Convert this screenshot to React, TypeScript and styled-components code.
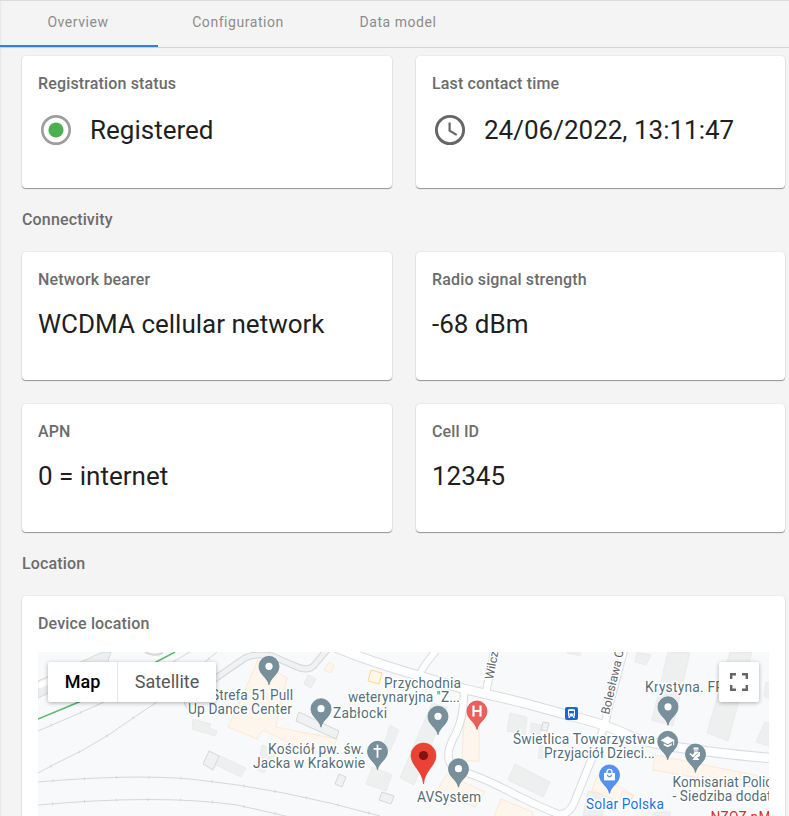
import React from "react";
import styled, { createGlobalStyle } from "styled-components";

const GlobalStyle = createGlobalStyle`
  * { box-sizing: border-box; }
  body { margin: 0; background: #f4f4f4; font-family: Roboto, "Liberation Sans", sans-serif; overflow: hidden; }
`;

const Page = styled.div`
  height: 816px;
  overflow: hidden;
  display: flex;
  flex-direction: column;
  border-top: 1px solid #dcdcdc;
  box-shadow: inset 2px 0 2px -1px #e6e6e6;
`;

const Tabs = styled.nav`
  display: flex;
  flex: none;
  height: 47px;
  border-bottom: 1px solid #d4d4d4;
`;

const Tab = styled.button<{ $width: number; $active?: boolean }>`
  width: ${(p) => p.$width}px;
  height: 46px;
  padding: 0 2px 2px 0;
  border: 0;
  border-bottom: 2px solid ${(p) => (p.$active ? "#3579f6" : "transparent")};
  background: none;
  color: #8c8c8c;
  font: 400 14px/42px Roboto, sans-serif;
  letter-spacing: 0.55px;
  text-align: center;
`;

const Content = styled.main`
  padding: 8px 4px 0 22px;
`;

const Grid = styled.section`
  display: grid;
  grid-template-columns: 370px 369px;
  gap: 24px;
`;

const Card = styled.article<{ $height: number }>`
  height: ${(p) => p.$height}px;
  padding: 16px;
  border-radius: 4px;
  background: #fff;
  box-shadow: 0 1px 1px rgba(0, 0, 0, 0.38), 0 0 2px rgba(0, 0, 0, 0.12);
`;

const Label = styled.h2`
  margin: 0;
  color: #6c6c6c;
  font-size: 16px;
  font-weight: 500;
  line-height: 24px;
  letter-spacing: 0.15px;
`;

const SectionTitle = styled(Label)`
  height: 64px;
  padding-top: 20px;
`;

const Value = styled.div<{ $tall?: boolean }>`
  display: flex;
  align-items: center;
  gap: 16px;
  height: 36px;
  margin-top: ${(p) => (p.$tall ? 16 : 14)}px;
  color: #1f1f1f;
  font-size: 26px;
  line-height: 36px;
  white-space: nowrap;
`;

const StatusIcon = styled.svg`
  width: 36px;
  height: 36px;
  flex: none;
`;

const MapFrame = styled.div`
  position: relative;
  height: 180px;
  margin-top: 16px;
  overflow: hidden;
`;

const MapDrawing = styled.svg`
  display: block;
  width: 731px;
  height: 180px;
`;

const MapTypes = styled.div`
  position: absolute;
  top: 10px;
  left: 10px;
  display: flex;
  height: 40px;
  border-radius: 2px;
  background: #fff;
  box-shadow: 0 1px 4px rgba(0, 0, 0, 0.3);
`;

const MapType = styled.button<{ $active?: boolean }>`
  width: ${(p) => (p.$active ? 69 : 99)}px;
  padding: 0;
  border: 0;
  background: none;
  color: ${(p) => (p.$active ? "#000" : "#565656")};
  font: ${(p) => (p.$active ? 500 : 400)} 18px/40px Roboto, sans-serif;
  & + & { border-left: 1px solid #e6e6e6; }
`;

const Fullscreen = styled.button`
  position: absolute;
  top: 10px;
  right: 10px;
  display: grid;
  place-items: center;
  width: 40px;
  height: 40px;
  padding: 0;
  border: 0;
  border-radius: 2px;
  background: #fff;
  box-shadow: 0 1px 4px rgba(0, 0, 0, 0.3);
`;

const PlaceText = styled.text<{ $color?: string }>`
  font: 400 13.8px Roboto, sans-serif;
  fill: ${(p) => p.$color || "#546e7a"};
  stroke: #fff;
  stroke-width: 3px;
  stroke-linejoin: round;
  paint-order: stroke;
`;

const StreetText = styled(PlaceText)`
  font-size: 12px;
  fill: #5f6368;
`;

const PIN = "M0 18.5C-1.2 11-10 8.5-10 0A10 10 0 0 1 10 0C10 8.5 1.2 11 0 18.5Z";

function Pin({ x, y, color = "#78909c", edge = "#607d8b", children }: {
  x: number; y: number; color?: string; edge?: string; children?: React.ReactNode;
}) {
  return (
    <g transform={`translate(${x} ${y})`}>
      <path d={PIN} fill={color} stroke={edge} strokeWidth=".7" />
      {children || <circle r="3.6" fill="#fff" />}
    </g>
  );
}

const buildings = [
  "193,719 211,724 209,728 217,731 215,736 192,729",
  "218,755 246,768 241,777 214,764",
  "262,745 277,751 264,773 257,770",
  "308,675 316,679 311,688 304,684",
  "390,725 399,730 390,751 383,747",
  "372,767 392,775 386,791 366,784",
  "432,703 447,707 414,785 400,778",
  "510,713 527,717 525,735 507,731",
  "531,723 542,725 540,735 531,733",
  "515,764 550,782 543,797 508,780",
  "540,745 547,748 545,759 538,758",
  "568,652 581,653 580,656 567,653",
  "637,652 651,655 646,665 635,662",
  "668,652 690,652 673,726 652,720",
  "730,652 752,652 728,741 707,733",
  "765,722 776,725 772,747 756,742",
  "588,791 606,795 602,816 583,816",
  "655,812 670,812 670,818 651,818",
  "766,682 772,682 772,700 764,696",
];

const outlined = [
  "209,751 219,756 213,770 203,764",
  "299,712 339,731 336,739 296,721",
  "339,774 346,777 342,787 335,784",
  "382,792 394,796 391,804 379,800",
  "543,722 549,723 547,731 541,730",
];

const shops = [
  "258,660 287,678 280,705 276,727 337,739 327,762 263,730 257,739 228,727 245,690",
  "329,662 334,665 331,673 324,670",
  "464,716 479,718 479,761 462,761",
  "447,774 485,792 475,807 437,791",
  "501,799 533,812 532,817 494,817",
  "598,775 634,795 628,806 592,790",
  "655,755 769,778 769,790 653,770",
  "622,791 633,795 629,804 620,799",
];

const streets = [
  { d: "M330 645Q370 662 420 676L464 689Q490 695 520 702L571 716Q608 725 630 736T769 758", w: 8.5 },
  { d: "M420 674Q423 666 436 651", w: 6 },
  { d: "M486 692L495 648", w: 6.5 },
  { d: "M464 690Q464 720 454 737Q444 756 452 766Q458 770 473 775Q490 781 520 797Q545 809 558 814Q570 816 576 798L590 763Q604 732 608 710L624 650", w: 6.5 },
];

const rails = [
  "M38 731L73 716L104 702L190 652",
  "M38 773L53 765L83 750L110 734L136 716L157 702L217 652",
  "M38 782Q130 774 190 779Q280 788 380 816",
  "M38 805Q160 794 237 805L290 817",
];

const loop = "M190 707Q184 700 190 696L245 658Q255 653 272 656L295 666Q310 673 316 663L327 650";

function AreaMap() {
  return (
    <MapDrawing viewBox="38 652 731 180">
      <rect x="38" y="652" width="731" height="180" fill="#f8f9fa" />
      <path d="M38 681L103 652H111L107 664L38 698Z" fill="#eceef0" stroke="#d7d9db" />
      <path d="M38 686L60 676" stroke="#fff" strokeWidth="6" />
      <g fill="none" stroke="#d5d7d9" strokeWidth="1">
        {rails.map((d) => <path key={d} d={d} />)}
      </g>
      <g fill="none" stroke="#d5d7d9" strokeWidth="3" strokeDasharray="1 31">
        {rails.map((d) => <path key={d} d={d} strokeDashoffset="-14" />)}
      </g>
      <path d="M145 652Q153 657 163 653" fill="none" stroke="#d5d7d9" strokeWidth="2" />
      <path d="M38 719L79 702L158 661L175 652" fill="none" stroke="#5bb974" strokeWidth="1.5" />
      <path d={loop} fill="none" stroke="#d3d6da" strokeWidth="7" />
      <path d={loop} fill="none" stroke="#eff1f3" strokeWidth="5" />
      <g fill="#eeefef" stroke="#e6e7e8" strokeWidth=".7">
        {buildings.map((p) => <polygon key={p} points={p} />)}
      </g>
      <g fill="#fef5ec" stroke="#fce4ca" strokeWidth=".8">
        {shops.map((p) => <polygon key={p} points={p} />)}
      </g>
      <g fill="#f0f1f3" stroke="#d5d7da">
        {outlined.map((p) => <polygon key={p} points={p} />)}
      </g>
      <polygon points="371,670 382,673 379,684 368,681" fill="#fff7e9" stroke="#fbd98c" />
      <g fill="none" stroke="#d9dbde">
        {streets.map((s) => <path key={s.d} d={s.d} strokeWidth={s.w + 2} />)}
      </g>
      <g fill="none" stroke="#fff">
        {streets.map((s) => <path key={s.d} d={s.d} strokeWidth={s.w} />)}
      </g>

      <StreetText transform="translate(493 680) rotate(-79)">Wilcz</StreetText>
      <StreetText transform="translate(609 715) rotate(-77)">Bolesława C</StreetText>
      <PlaceText x="211" y="700" textLength="82">Strefa 51 Pull</PlaceText>
      <PlaceText x="188" y="714" textLength="104">Up Dance Center</PlaceText>
      <PlaceText x="333" y="718" textLength="54">Zabłocki</PlaceText>
      <PlaceText x="384" y="688" textLength="77">Przychodnia</PlaceText>
      <PlaceText x="348" y="702" textLength="112">weterynaryjna "Z...</PlaceText>
      <PlaceText x="268" y="754" textLength="96">Kościół pw. św.</PlaceText>
      <PlaceText x="253" y="768" textLength="112">Jacka w Krakowie</PlaceText>
      <PlaceText x="417" y="802" textLength="64">AVSystem</PlaceText>
      <PlaceText x="513" y="744" textLength="142">Świetlica Towarzystwa</PlaceText>
      <PlaceText x="544" y="758" textLength="111">Przyjaciół Dzieci...</PlaceText>
      <PlaceText x="645" y="692" textLength="79">Krystyna. FP</PlaceText>
      <PlaceText x="672.500" y="787" textLength="100">Komisariat Polic</PlaceText>
      <PlaceText x="672.500" y="801" textLength="99">- Siedziba dodat</PlaceText>
      <PlaceText x="586" y="808.500" textLength="78" $color="#1a73e8">Solar Polska</PlaceText>
      <PlaceText x="710.500" y="821.500" textLength="60" $color="#d93025">NZOZ nM</PlaceText>

      <Pin x={269} y={666.3} />
      <Pin x={321} y={708.7} />
      <Pin x={438} y={716.3} />
      <Pin x={458.5} y={768.7} />
      <Pin x={668} y={706.8} />
      <Pin x={377.5} y={751.3}>
        <path d="M0-6.500V6.500M-4-2.500H4" stroke="#fff" strokeWidth="1.8" />
      </Pin>
      <Pin x={477} y={711} color="#ec5f5a" edge="#d9423c">
        <path d="M-3.500-5.500V5.500M3.500-5.500V5.500M-3.500 0H3.500" stroke="#fff" strokeWidth="2.200" />
      </Pin>
      <Pin x={609.5} y={774.9} color="#5491f5" edge="#3e7de0">
        <path d="M-5.500-2H5.500V5.500H-5.500Z" fill="#fff" />
        <path d="M-2.500-2V-3A2.500 2.500 0 0 1 2.500-3V-2" fill="none" stroke="#fff" strokeWidth="1.3" />
        <path d="M-2.300 0Q0 4 2.300 0" fill="none" stroke="#5491f5" strokeWidth="1.2" />
      </Pin>
      <Pin x={667.7} y={741.3}>
        <path d="M-7-1L0-5L7-1L0 3Z" fill="#fff" />
        <path d="M-4 2V4L0 6L4 4V2L0 4Z" fill="#fff" />
        <path d="M6-1V4" stroke="#fff" />
      </Pin>
      <Pin x={695.5} y={754}>
        <path d="M-2-6.500H3V-5L2.500-2.500H-1.500L-2-5ZM-1-2H4.500V2L2 3.500L4 6H-3L-1 2.500L-3 3L-6 0L-5-1L-3 1Z" fill="#fff" />
        <path d="M-2-4H3M-1 2L3-1" stroke="#78909c" strokeWidth=".8" />
      </Pin>
      <rect x="565" y="707" width="13" height="13" rx="2" fill="#1967d2" />
      <path d="M568 709.500Q571.500 708.500 575 709.500V716H574.500V718H573V716.500H570V718H568.500V716H568Z" fill="#fff" />
      <path d="M569 711H574V713.500H569Z" fill="#1967d2" />
      <path d="M569 715H570M573 715H574" stroke="#1967d2" />
      <path d="M423.500 784C422.200 770 411 766 411 755.500A12.500 12.500 0 0 1 436 755.500C436 766 424.800 770 423.500 784Z" fill="#ea4335" stroke="#d73a2e" strokeWidth=".6" />
      <circle cx="423.500" cy="755.500" r="4.600" fill="#811411" />
    </MapDrawing>
  );
}

export default function App() {
  return (
    <Page>
      <GlobalStyle />
      <Tabs>
        <Tab $width={158} $active>Overview</Tab>
        <Tab $width={162}>Configuration</Tab>
        <Tab $width={158}>Data model</Tab>
      </Tabs>
      <Content>
        <Grid>
          <Card $height={132}>
            <Label>Registration status</Label>
            <Value $tall>
              <StatusIcon viewBox="0 0 36 36">
                <circle cx="18" cy="18" r="13.700" fill="none" stroke="#9e9e9e" strokeWidth="2.700" />
                <circle cx="18" cy="18" r="7.600" fill="#4caf50" />
              </StatusIcon>
              Registered
            </Value>
          </Card>
          <Card $height={132}>
            <Label>Last contact time</Label>
            <Value $tall>
              <StatusIcon viewBox="0 0 36 36">
                <circle cx="18" cy="18" r="13.600" fill="none" stroke="#666" strokeWidth="2.900" />
                <path d="M17.600 10.500V18.700L24.700 22.900" fill="none" stroke="#666" strokeWidth="2.200" />
              </StatusIcon>
              24/06/2022, 13:11:47
            </Value>
          </Card>
        </Grid>
        <SectionTitle>Connectivity</SectionTitle>
        <Grid>
          <Card $height={128}><Label>Network bearer</Label><Value>WCDMA cellular network</Value></Card>
          <Card $height={128}><Label>Radio signal strength</Label><Value>-68 dBm</Value></Card>
          <Card $height={128}><Label>APN</Label><Value>0 = internet</Value></Card>
          <Card $height={128}><Label>Cell ID</Label><Value>12345</Value></Card>
        </Grid>
        <SectionTitle>Location</SectionTitle>
        <Card $height={250}>
          <Label>Device location</Label>
          <MapFrame>
            <AreaMap />
            <MapTypes>
              <MapType $active>Map</MapType>
              <MapType>Satellite</MapType>
            </MapTypes>
            <Fullscreen aria-label="Full screen">
              <svg width="18" height="18" viewBox="0 0 18 18" fill="none" stroke="#666" strokeWidth="2.400">
                <path d="M1.200 6V1.200H6M12 1.200H16.800V6M16.800 12V16.800H12M6 16.800H1.200V12" />
              </svg>
            </Fullscreen>
          </MapFrame>
        </Card>
      </Content>
    </Page>
  );
}
